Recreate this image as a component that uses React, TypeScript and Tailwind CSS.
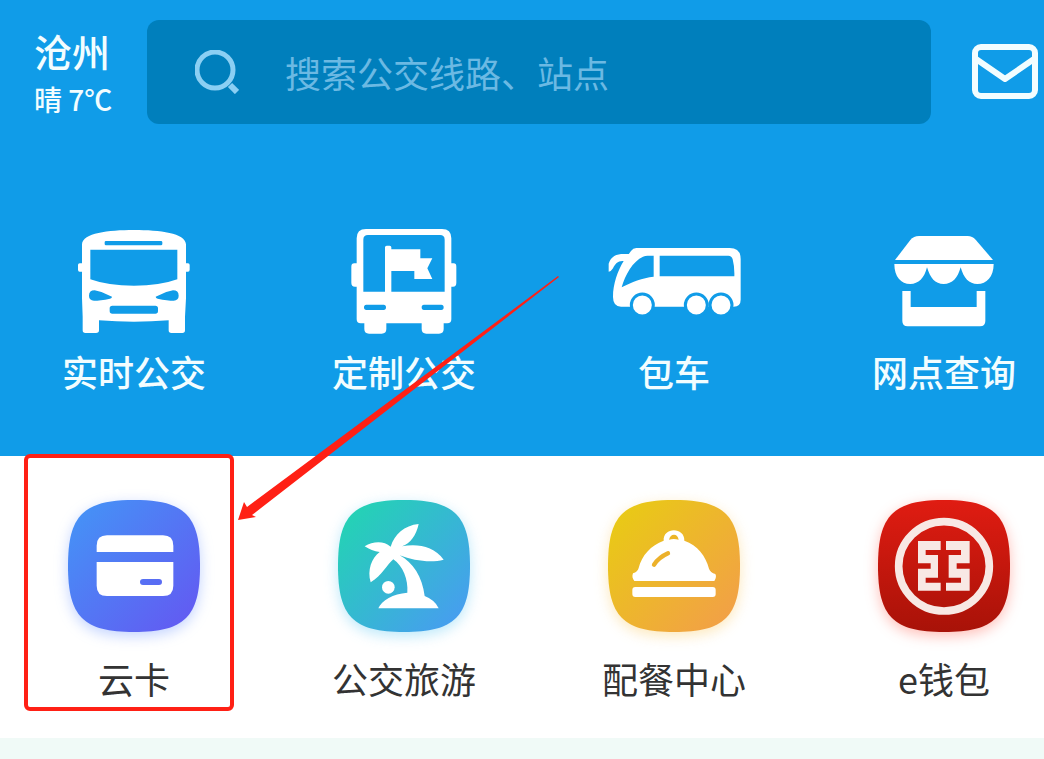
import type { ReactNode } from "react";

const SQUIRCLE =
  "M0 198C0 46 46 0 198 0S396 46 396 198 350 396 198 396 0 350 0 198Z";

function RealtimeBusIcon() {
  return (
    <svg viewBox="6 39 432 330" className="h-[110px] w-36" fill="white" aria-hidden="true">
      <path
        fillRule="evenodd"
        d="M68 346Q68 354 76 354H108Q117 354 117 346V316Q222 324 326 316V346Q326 354 334 354H367Q375 354 375 346V305L378 250V170H384Q389 170 389 164V150Q389 145 384 145H378V88C376 54 300 45 222 45S68 54 66 88V145H59Q54 145 54 150V164Q54 170 59 170H66V250L68 305Z
        M138 78H303Q307 78 307 82V87Q307 91 303 91H138Q134 91 134 87V82Q134 78 138 78Z
        M91 104H352V193Q300 212 222 212Q143 212 91 193Z
        M87 242Q87 226 104 226Q130 230 156 245Q156 250 150 251Q120 257 102 257Q87 256 87 242Z
        M356 242Q356 226 339 226Q313 230 287 245Q287 250 293 251Q323 257 341 257Q356 256 356 242Z
        M157 272H286Q294 272 294 280V288Q294 296 286 296H157Q149 296 149 288V280Q149 272 157 272Z"
      />
    </svg>
  );
}

function CustomBusIcon() {
  return (
    <svg viewBox="21 39 432 330" className="h-[110px] w-36" fill="white" aria-hidden="true">
      <path
        fillRule="evenodd"
        d="M123 42H351Q379 42 379 70V145H386Q394 145 394 155V203Q394 215 384 215H379V313Q379 325 367 325H356V342Q356 356 342 356H304Q290 356 290 342V325H184V342Q184 356 170 356H132Q118 356 118 342V325H107Q95 325 95 313V215H90Q79 215 79 203V155Q79 145 88 145H95V70Q95 42 123 42Z
        M129 60Q115 60 115 74V230H180V97Q180 92 185 92H194Q199 92 199 97V103H286V130H322L307 160L322 192H268V168H199V230H359V74Q359 60 345 60Z
        M124 269H176Q183 269 183 277T176 285H124Q117 285 117 277T124 269Z
        M297 269H349Q356 269 356 277T349 285H297Q290 285 290 277T297 269Z"
      />
    </svg>
  );
}

function CoachIcon() {
  return (
    <svg viewBox="19 39 432 330" className="h-[110px] w-36" fill="white" aria-hidden="true">
      <path
        fillRule="evenodd"
        d="M122 99H402Q435 99 435 132V254Q435 275 414 275H76Q52 274 52 246C52 206 66 168 84 138L106 108Q112 99 122 99Z
        M78 217C88 180 112 138 142 125Q148 122 156 122H174V185C140 188 108 202 78 217Z
        M192 122H398Q408 122 411 133Q417 156 416 184H192Z"
      />
      <path
        d="M39 170V146C46 124 62 117 84 117H108L96 138H84C68 136 58 146 52 160Q47 169 39 170Z"
      />
      <g stroke="#109ce8" strokeWidth="9">
        <circle cx="140" cy="270" r="33" />
        <circle cx="302" cy="270" r="33" />
        <circle cx="376" cy="270" r="33" />
      </g>
    </svg>
  );
}

function OutletIcon() {
  return (
    <svg viewBox="21 39 432 330" className="h-[110px] w-36" fill="white" aria-hidden="true">
      <path d="M90 135L136 75Q146 63 162 63H308Q322 63 332 74L384 135Z" />
      <path d="M88 147H386C386 185 365 207 337 207C312 207 296 190 287 157C278 190 262 207 236 207C210 207 196 190 186 157C178 190 160 207 136 207C108 207 88 185 88 147Z" />
      <path d="M112 228H137V276H335V228H361V318Q361 334 345 334H128Q112 334 112 318Z" />
    </svg>
  );
}

function Tile({
  id,
  from,
  to,
  diagonal = true,
  glow,
  children,
}: {
  id: string;
  from: string;
  to: string;
  diagonal?: boolean;
  glow: string;
  children: ReactNode;
}) {
  return (
    <svg viewBox="0 0 396 396" className={`size-[132px] overflow-visible ${glow}`} aria-hidden="true">
      <defs>
        <linearGradient id={id} x1="0" y1={diagonal ? "0.2" : "0"} x2={diagonal ? "0.85" : "0"} y2="1">
          <stop offset="0" stopColor={from} />
          <stop offset="1" stopColor={to} />
        </linearGradient>
      </defs>
      <path d={SQUIRCLE} fill={`url(#${id})`} />
      {children}
    </svg>
  );
}

function CloudCardIcon() {
  return (
    <Tile id="card" from="#4690f6" to="#625bf2" glow="drop-shadow-[0_4px_7px_rgba(80,130,255,0.35)]">
      <g transform="translate(-157 -165)">
        <path fill="white" d="M243 321V302Q243 271 274 271H442Q473 271 473 302V321Z" />
        <path
          fill="white"
          fillRule="evenodd"
          d="M243 351H473V422Q473 453 442 453H274Q243 453 243 422ZM382 402Q373 402 373 411T382 420H430Q439 420 439 411T430 402Z"
        />
      </g>
    </Tile>
  );
}

function TravelIcon() {
  return (
    <Tile id="travel" from="#24d2b5" to="#479df0" glow="drop-shadow-[0_4px_7px_rgba(60,190,240,0.35)]">
      <g transform="translate(-53 -44)" fill="white">
        <path d="M211 184C222 148 252 120 295 116C288 150 270 174 245 183C290 174 340 182 370 223C332 234 280 226 238 210C278 232 306 274 313 332Q344 344 355 369H174C184 344 218 326 261 322C264 282 248 242 219 222C200 238 186 270 151 291C140 254 154 218 178 200C162 198 146 192 133 183C158 168 190 166 211 184Z" />
        <circle cx="204" cy="306" r="19" />
      </g>
    </Tile>
  );
}

function CateringIcon() {
  return (
    <Tile id="catering" from="#e9c916" to="#f2a047" glow="drop-shadow-[0_4px_7px_rgba(250,190,60,0.35)]">
      <g transform="translate(-53 -44)">
        <path
          fill="white"
          d="M220 166C217 124 284 124 282 166C322 180 346 212 356 250Q360 262 375 266Q380 274 372 287H132Q123 276 128 264Q142 260 145 248C154 210 182 180 220 166Z"
        />
        <path d="M236 163Q240 148 251 148T265 163Q250 159 236 163Z" fill="#ecb528" />
        <path d="M191 238Q206 216 233 204" stroke="#ecb12b" strokeWidth="13" strokeLinecap="round" fill="none" />
        <rect x="126" y="305" width="250" height="30" rx="9" fill="white" />
      </g>
    </Tile>
  );
}

function WalletIcon() {
  return (
    <Tile id="wallet" from="#e01c12" to="#a81208" diagonal={false} glow="drop-shadow-[0_4px_7px_rgba(255,70,50,0.35)]">
      <g transform="translate(-53 -44)">
        <ellipse cx="251" cy="243" rx="136" ry="134" fill="none" stroke="#f8e8e4" strokeWidth="23" />
        <g fill="#f8e8e4">
          <path d="M173 167H241V194H196V209H233V277H196V292H241V316H173V250H211V234H173Z" />
          <path d="M257 167H328V234H289V250H328V316H257V292H302V277H265V209H302V194H257Z" />
        </g>
      </g>
    </Tile>
  );
}

const services = [
  { label: "实时公交", icon: <RealtimeBusIcon /> },
  { label: "定制公交", icon: <CustomBusIcon /> },
  { label: "包车", icon: <CoachIcon /> },
  { label: "网点查询", icon: <OutletIcon /> },
];

const apps = [
  { label: "云卡", icon: <CloudCardIcon />, marked: true },
  { label: "公交旅游", icon: <TravelIcon /> },
  { label: "配餐中心", icon: <CateringIcon /> },
  { label: "e钱包", icon: <WalletIcon /> },
];

export default function App() {
  return (
    <main className="relative flex min-h-screen flex-col bg-[#f0faf7] font-['Noto_Sans_CJK_SC',sans-serif]">
      <section className="bg-[#109ce8] pb-[63px] font-medium text-[#f2fdff]">
        <header className="flex items-center pt-5 pr-1.5 pl-[34px]">
          <div className="w-20 shrink-0 pt-1 whitespace-nowrap">
            <p className="text-[38px] leading-[50px]">沧州</p>
            <p className="text-[28px] leading-[46px]">晴 7℃</p>
          </div>
          <label className="ml-[33px] flex h-[104px] min-w-0 flex-1 items-center rounded-xl bg-[#007fbc] pl-12">
            <svg viewBox="0 0 44 44" className="size-11 shrink-0" fill="none" stroke="#8bcff3" aria-hidden="true">
              <circle cx="20" cy="20" r="18" strokeWidth="5" />
              <path d="M35 35L42 42" strokeWidth="6" />
            </svg>
            <input
              type="search"
              aria-label="搜索公交线路、站点"
              placeholder="搜索公交线路、站点"
              className="ml-[46px] h-14 min-w-0 flex-1 bg-transparent text-4xl font-normal outline-none placeholder:text-[#6bb9e3]"
            />
          </label>
          <button type="button" aria-label="消息" className="ml-[41px] shrink-0">
            <svg viewBox="0 0 66 56" className="h-14 w-[66px]" fill="none" stroke="currentColor" strokeWidth="6" aria-hidden="true">
              <rect x="3" y="3" width="60" height="49" rx="6" />
              <path d="M4 15L33 35L62 15" strokeLinejoin="round" />
            </svg>
          </button>
        </header>
        <nav className="flex justify-between pt-[104px] pr-7 pl-[62px]">
          {services.map((item) => (
            <a key={item.label} href="#" className="flex w-36 flex-col items-center gap-[11px]">
              {item.icon}
              <span className="text-4xl leading-[44px] whitespace-nowrap">{item.label}</span>
            </a>
          ))}
        </nav>
      </section>

      <nav className="flex justify-between bg-white pt-11 pr-7 pb-[38px] pl-[62px] text-[#333]">
        {apps.map((item) => (
          <a key={item.label} href="#" className="relative flex w-36 flex-col items-center gap-6">
            {item.icon}
            <span className="text-4xl leading-[44px] whitespace-nowrap">{item.label}</span>
            {item.marked && (
              <span className="absolute -top-[46px] -right-7 -bottom-[11px] -left-[38px] rounded-md border-4 border-[#ff2015]" />
            )}
          </a>
        ))}
      </nav>

      <svg
        viewBox="0 0 322 246"
        className="pointer-events-none absolute top-[275px] left-[238px] h-[246px] w-[322px]"
        fill="#ff2015"
        aria-hidden="true"
      >
        <path d="M0 245L6 227L9 232L320 1L321 2L14 240L18 242Z" />
      </svg>
    </main>
  );
}
